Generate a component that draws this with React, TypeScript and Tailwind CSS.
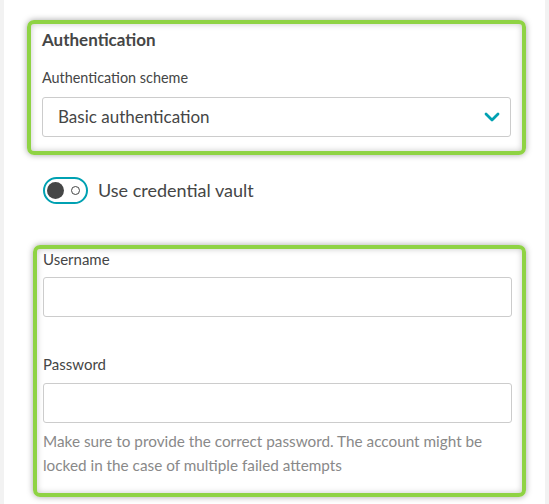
import React from 'react';

const font = { fontFamily: 'Lato, "Noto Sans", sans-serif' };

// Green annotation box with soft grey glow inside and out
const highlight =
  'rounded-[7px] border-4 border-[#8fd344] shadow-[0_0_6px_rgba(0,0,0,0.35),inset_0_0_6px_rgba(0,0,0,0.22)]';

const TextInput: React.FC = () => (
  <div className="h-[40px] w-[469px] rounded-[3px] border border-[#cccccc] bg-white" />
);

export default function App() {
  return (
    <div className="flex h-[504px] w-[549px] bg-[#f2f2f2] text-[#454646]" style={font}>
      <div className="ml-[4px] flex w-[541px] flex-col bg-white pt-[20px]">
        {/* Authentication scheme */}
        <div className={`ml-[23px] w-[499px] px-[11px] pb-[14px] pt-[5px] ${highlight}`}>
          <div className="text-[17px] font-bold leading-[22px]">Authentication</div>
          <div className="mt-[17px] text-[14.4px] leading-[20px]">Authentication scheme</div>
          <div className="mt-[9px] flex h-[40px] w-[469px] items-center justify-between rounded-[3px] border border-[#cccccc] bg-white pl-[15px] pr-[10px]">
            <span className="text-[17px]">Basic authentication</span>
            <svg width="16" height="10" viewBox="0 0 16 10" fill="none">
              <path d="M2 2l6 6 6-6" stroke="#00a1b2" strokeWidth="2.8" strokeLinecap="round" strokeLinejoin="round" />
            </svg>
          </div>
        </div>

        {/* Credential vault toggle */}
        <div className="ml-[39px] mt-[22px] flex h-[27px] items-center gap-[10px]">
          <div className="flex h-[27px] w-[45px] items-center justify-between rounded-full border-2 border-[#00a1b2] bg-white pl-[2px] pr-[6px]">
            <div className="h-[17px] w-[17px] rounded-full bg-[#454646]" />
            <div className="h-[9px] w-[9px] rounded-full border-[1.5px] border-[#454646]" />
          </div>
          <span className="text-[18px] leading-[27px]">Use credential vault</span>
        </div>

        {/* Username / password */}
        <div className={`ml-[29px] mt-[41px] w-[493px] pl-[6px] pr-[11px] pb-[16px] ${highlight}`}>
          <div className="text-[15px] leading-[20px]">Username</div>
          <div className="mt-[8px]">
            <TextInput />
          </div>
          <div className="mt-[37px] text-[15px] leading-[20px]">Password</div>
          <div className="mt-[9px]">
            <TextInput />
          </div>
          <p className="mt-[6px] w-[469px] text-[15.3px] leading-[24px] text-[#898989]">
            Make sure to provide the correct password. The account might be locked in the case of multiple failed
            attempts
          </p>
        </div>
      </div>
    </div>
  );
}
